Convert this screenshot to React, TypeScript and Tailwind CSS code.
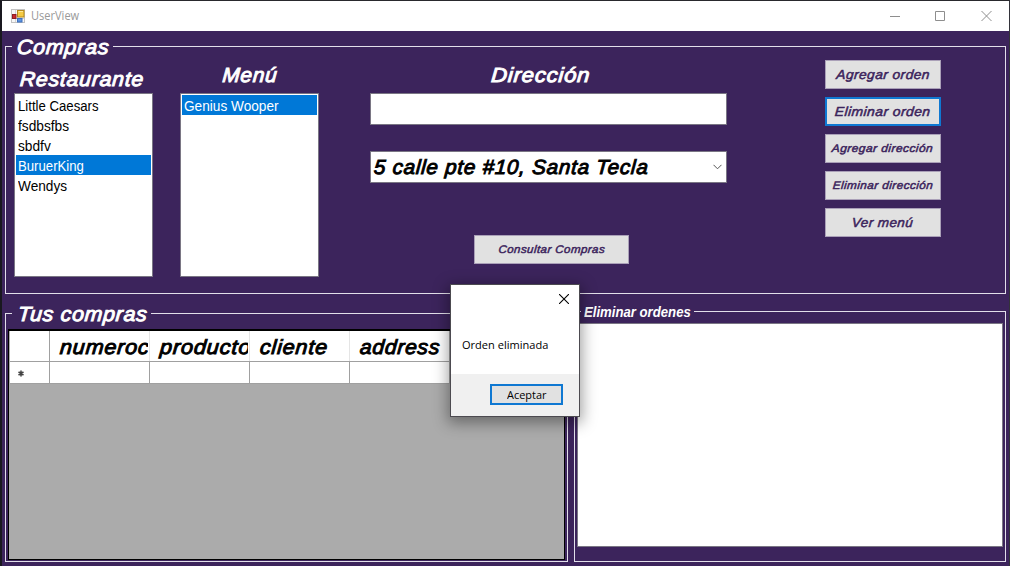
import type { ReactNode } from "react";

const DISPLAY = "font-normal italic tracking-[0.7px] [-webkit-text-stroke:0.95px_currentColor]";
const BUTTON_TEXT = "font-normal italic tracking-[0.4px] [-webkit-text-stroke:0.5px_currentColor]";

function Text({ className, children }: { className: string; children: ReactNode }) {
  return <span className={`inline-block whitespace-nowrap ${className}`}>{children}</span>;
}

function ListItem({ label, fit, selected }: { label: string; fit: string; selected?: boolean }) {
  return (
    <li className={`h-5 pl-0.5 text-[15.5px] leading-[22px] ${selected ? "bg-[#0078d7] text-white" : "text-black"}`}>
      <Text className={`origin-left ${fit}`}>{label}</Text>
    </li>
  );
}

function ActionButton({ label, fit, focused }: { label: string; fit: string; focused?: boolean }) {
  return (
    <button
      className={`flex h-[29px] w-[116px] items-center justify-center bg-[#e1e1e1] text-[#3c245c] ${BUTTON_TEXT} ${
        focused ? "border-2 border-[#0f78d2]" : "border border-[#aaa0b8]"
      }`}
    >
      <Text className={`-skew-x-4 ${fit}`}>{label}</Text>
    </button>
  );
}

function GridHeader({ label, fit, last }: { label: string; fit: string; last?: boolean }) {
  return (
    <div className={`h-[30px] w-[100px] overflow-hidden border-r pr-px ${last ? "border-[#a0a0a0]" : "border-[#e5e5e5]"}`}>
      <div className={`h-full overflow-hidden pl-[10px] text-[20.5px] leading-[32px] ${DISPLAY}`}>
        <Text className={`origin-left -skew-x-4 ${fit}`}>{label}</Text>
      </div>
    </div>
  );
}

function FormIcon() {
  return (
    <svg width="15" height="15" viewBox="0 0 15 15" className="block">
      <rect x="0.5" y="0.5" width="13" height="13" fill="#f7f7f7" stroke="#c2c2c2" />
      <path d="M4.5 1v12M1 9.5h12" stroke="#d3d3d3" />
      <rect x="6.5" y="1.5" width="6.5" height="6.5" fill="#f5cb45" stroke="#b58a1c" />
      <path d="M7.5 2.5h4.5" stroke="#ffe99a" />
      <rect x="1.5" y="5.5" width="3.5" height="4" fill="#c8282d" stroke="#8d1d24" />
      <rect x="6.5" y="9.5" width="4.5" height="3.5" fill="#5d93df" stroke="#3d6fbd" />
    </svg>
  );
}

export default function App() {
  return (
    <div className="relative h-[566px] w-[1010px] overflow-hidden border-t border-r border-l-2 border-t-[#29292d] border-r-[#33333a] border-l-[#19181f] bg-[#3c245c] font-['Liberation_Sans',Arial,sans-serif]">
      <header className="flex h-[30px] items-center bg-white pr-[17px] pl-[9px]">
        <FormIcon />
        <span className="ml-[5px] inline-block w-[60px] origin-left scale-x-[0.92] font-['Open_Sans','Noto_Sans',sans-serif] text-xs leading-4 text-[#999]">
          UserView
        </span>
        <svg className="ml-auto" width="102" height="12" viewBox="0 0 102 12" fill="none" stroke="#8e8e8e">
          <path d="M0 6.5h10M45.5 1.5h9v9h-9zM91.5 1l10 10M101.5 1l-10 10" />
        </svg>
      </header>

      <main className="pt-[5px] pl-[3px]">
        <fieldset className="h-[258px] w-[1001px] border border-[#e2dfea]">
          <legend className={`ml-[6px] h-[21px] w-[101px] pl-[5px] text-[20.5px] leading-[21px] text-white ${DISPLAY}`}>
            <Text className="origin-left -skew-x-4 scale-x-105">Compras</Text>
          </legend>
          <div className="flex">
            <section className="ml-2 w-[139px]">
              <h2 className={`h-9 pt-[10px] pl-[6px] text-[20.5px] leading-6 text-white ${DISPLAY}`}>
                <Text className="origin-left -skew-x-4 scale-x-104">Restaurante</Text>
              </h2>
              <ul className="h-[184px] border border-[#7a7684] bg-white p-px">
                <ListItem label="Little Caesars" fit="scale-x-[0.85]" />
                <ListItem label="fsdbsfbs" fit="scale-x-[0.885]" />
                <ListItem label="sbdfv" fit="scale-x-[0.885]" />
                <ListItem label="BuruerKing" fit="scale-x-[0.85]" selected />
                <ListItem label="Wendys" fit="scale-x-[0.88]" />
              </ul>
            </section>

            <section className="ml-[27px] w-[139px]">
              <h2 className={`h-9 pt-[6px] pl-[2px] text-center text-[20.5px] leading-6 text-white ${DISPLAY}`}>
                <Text className="-skew-x-4 scale-x-102">Menú</Text>
              </h2>
              <ul className="h-[184px] border border-[#7a7684] bg-white p-px">
                <ListItem label="Genius Wooper" fit="scale-x-[0.88]" selected />
              </ul>
            </section>

            <section className="ml-[51px] flex w-[357px] flex-col">
              <h2 className={`h-9 pt-[6px] pr-[15px] text-center text-[20.5px] leading-6 text-white ${DISPLAY}`}>
                <Text className="-skew-x-4 scale-x-108">Dirección</Text>
              </h2>
              <div className="h-8 border border-[#7a7684] bg-white" />
              <div className="mt-[26px] flex h-8 items-center justify-between border border-[#7a7684] bg-white pr-1 pl-[3px]">
                <Text className={`origin-left -skew-x-4 scale-x-101 text-[20.5px] text-black ${DISPLAY}`}>
                  5 calle pte #10, Santa Tecla
                </Text>
                <svg width="9" height="6" viewBox="0 0 9 6" fill="none" stroke="#555">
                  <path d="M0.5 0.8l4 4 4-4" />
                </svg>
              </div>
              <button
                className={`mt-[52px] ml-[104px] flex h-[29px] w-[155px] items-center justify-center border border-[#aaa0b8] bg-[#e1e1e1] text-[11px] text-[#3c245c] ${BUTTON_TEXT}`}
              >
                <Text className="-skew-x-4 scale-x-105">Consultar Compras</Text>
              </button>
            </section>

            <nav className="mt-[3px] ml-[98px] flex flex-col gap-2">
              <ActionButton label="Agregar orden" fit="text-[13px] scale-x-106" />
              <ActionButton label="Eliminar orden" fit="text-[13px] scale-x-107" focused />
              <ActionButton label="Agregar dirección" fit="text-[11px] scale-x-109" />
              <ActionButton label="Eliminar dirección" fit="text-[11px] scale-x-107" />
              <ActionButton label="Ver menú" fit="text-[13px] scale-x-104" />
            </nav>
          </div>
        </fieldset>

        <div className="flex gap-[6px] pt-[7px]">
          <fieldset className="mt-[2px] h-[259px] w-[563px] border border-[#e2dfea]">
            <legend className={`ml-[6px] h-[21px] w-[139px] pl-[6px] text-[20.5px] leading-[22px] text-white ${DISPLAY}`}>
              <Text className="origin-left -skew-x-4 scale-x-104">Tus compras</Text>
            </legend>
            <div className="mt-[5px] ml-[2px] h-[231px] w-[557px] border-t-2 border-r border-b border-l border-black bg-[#ababab]">
              <div className="ml-px flex w-[440px] border-b border-[#a0a0a0] bg-white">
                <div className="h-[30px] w-10 border-r border-[#a0a0a0]" />
                <GridHeader label="numerocompra" fit="scale-x-106" />
                <GridHeader label="producto" fit="scale-x-107" />
                <GridHeader label="cliente" fit="scale-x-106" />
                <GridHeader label="address" fit="scale-x-103" last />
              </div>
              <div className="ml-px flex h-[22px] w-[440px] border-b border-[#a0a0a0] bg-white">
                <div className="flex w-10 items-center border-r border-[#a0a0a0] pt-px pl-2">
                  <svg width="6" height="7" viewBox="0 0 6 7" stroke="#444" strokeWidth="1.6">
                    <path d="M3 0.5v6M0.5 2l5 3M5.5 2l-5 3" />
                  </svg>
                </div>
                <div className="w-[100px] border-r border-[#a0a0a0]" />
                <div className="w-[100px] border-r border-[#a0a0a0]" />
                <div className="w-[100px] border-r border-[#a0a0a0]" />
                <div className="w-[100px] border-r border-[#a0a0a0]" />
              </div>
            </div>
          </fieldset>

          <fieldset className="h-[261px] w-[432px] border border-[#e2dfea]">
            <legend className="ml-[6px] h-[21px] w-[113px] pl-[3px] text-sm leading-[22px] font-bold text-white italic">
              <Text className="origin-left scale-x-[0.94]">Eliminar ordenes</Text>
            </legend>
            <div className="mt-px ml-[2px] h-[224px] w-[426px] border border-[#7a7684] bg-white" />
          </fieldset>
        </div>
      </main>

      <div
        role="dialog"
        className="absolute top-[283px] left-[448px] flex h-[133px] w-[130px] flex-col border border-[#4c4a50] bg-white font-['Open_Sans','Noto_Sans',sans-serif] text-black shadow-[0_4px_14px_2px_rgba(0,0,0,0.38)]"
      >
        <div className="flex justify-end pt-[9px] pr-[10px]">
          <svg width="10" height="10" viewBox="0 0 10 10" stroke="#000" strokeWidth="1.1">
            <path d="M0 0l10 10M10 0L0 10" />
          </svg>
        </div>
        <p className="mt-[32px] pl-[11px] text-[11.5px] leading-[17px]">
          <Text className="origin-left scale-x-[0.96]">Orden eliminada</Text>
        </p>
        <div className="mt-auto flex h-[42px] justify-end bg-[#f0f0f0] pt-[10px] pr-[16px]">
          <button className="flex h-[21px] w-[73px] items-center justify-center border-2 border-[#0f78d2] bg-[#e1e1e1] text-[11.5px] leading-4">
            <Text className="scale-x-[0.95]">Aceptar</Text>
          </button>
        </div>
      </div>
    </div>
  );
}
